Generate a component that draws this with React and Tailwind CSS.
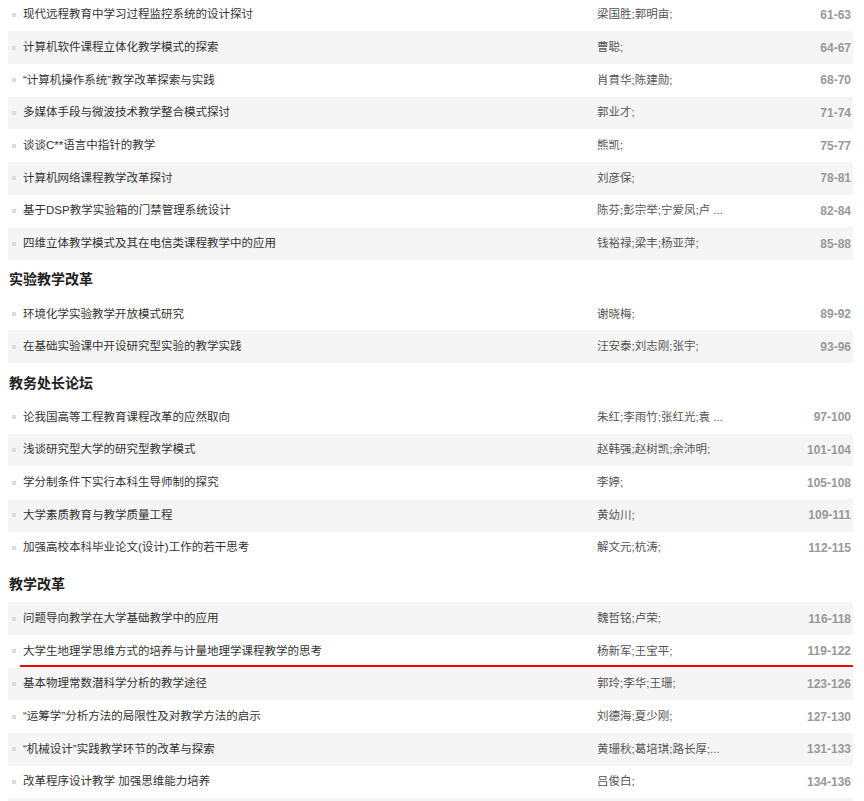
const sections = [
  {
    title: null,
    items: [
      ["现代远程教育中学习过程监控系统的设计探讨", "梁国胜;郭明亩;", "61-63"],
      ["计算机软件课程立体化教学模式的探索", "曹聪;", "64-67"],
      ["“计算机操作系统”教学改革探索与实践", "肖賁华;陈建勋;", "68-70"],
      ["多媒体手段与微波技术教学整合模式探讨", "郭业才;", "71-74"],
      ["谈谈C**语言中指针的教学", "熊凯;", "75-77"],
      ["计算机网络课程教学改革探讨", "刘彦保;", "78-81"],
      ["基于DSP教学实验箱的门禁管理系统设计", "陈芬;彭宗举;宁爱凤;卢 ...", "82-84"],
      ["四维立体教学模式及其在电信类课程教学中的应用", "钱裕禄;梁丰;杨亚萍;", "85-88"],
    ],
  },
  {
    title: "实验教学改革",
    items: [
      ["环境化学实验教学开放模式研究", "谢晓梅;", "89-92"],
      ["在基础实验课中开设研究型实验的教学实践", "汪安泰;刘志刚;张宇;", "93-96"],
    ],
  },
  {
    title: "教务处长论坛",
    items: [
      ["论我国高等工程教育课程改革的应然取向", "朱红;李雨竹;张红光;袁 ...", "97-100"],
      ["浅谈研究型大学的研究型教学模式", "赵韩强;赵树凯;余沛明;", "101-104"],
      ["学分制条件下实行本科生导师制的探究", "李婷;", "105-108"],
      ["大学素质教育与教学质量工程", "黄幼川;", "109-111"],
      ["加强高校本科毕业论文(设计)工作的若干思考", "解文元;杭涛;", "112-115"],
    ],
  },
  {
    title: "教学改革",
    items: [
      ["问题导向教学在大学基础教学中的应用", "魏哲铭;卢荣;", "116-118"],
      ["大学生地理学思维方式的培养与计量地理学课程教学的思考", "杨新军;王宝平;", "119-122", true],
      ["基本物理常数潜科学分析的教学途径", "郭玲;李华;王珊;", "123-126"],
      ["“运筹学”分析方法的局限性及对教学方法的启示", "刘德海;夏少刚;", "127-130"],
      ["“机械设计”实践教学环节的改革与探索", "黄珊秋;葛培琪;路长厚;...", "131-133"],
      ["改革程序设计教学 加强思维能力培养", "吕俊白;", "134-136"],
    ],
  },
];

function Row({ item, gray }) {
  const [title, authors, pages, active] = item;
  return (
    <div className={`relative flex items-center h-[32.65px] ${gray ? "bg-[#f5f5f5]" : "bg-white"}`}>
      <span className="ml-[4px] w-[4px] h-[4px] bg-[#dcdcdc] shrink-0" />
      <span className="ml-[7px] flex-1 whitespace-nowrap text-[11.5px] text-[#333]">{title}</span>
      <span className="w-[134px] whitespace-nowrap text-[11.5px] text-[#555]">{authors}</span>
      <span className="w-[122px] text-right pr-[2px] text-[12px] font-semibold text-[#999]">{pages}</span>
      {active && <span className="absolute left-[12px] right-0 bottom-[1px] h-[2px] bg-[#ff0000]" />}
    </div>
  );
}

export default function App() {
  let idx = 0;
  return (
    <div
      className="bg-white min-h-screen overflow-hidden"
      style={{ fontFamily: '"Liberation Sans", "Noto Sans CJK SC", sans-serif' }}
    >
      <div className="ml-[8px] w-[845px] -mt-[1.3px]">
        {sections.map((sec, si) => (
          <div key={si}>
            {sec.title && (
              <div className="h-[38px] flex items-center pt-[2px] pl-[1px] text-[14px] font-bold text-[#222]">
                {sec.title}
              </div>
            )}
            {sec.items.map((item, i) => {
              const gray = idx % 2 === 1;
              idx++;
              return <Row key={i} item={item} gray={gray} />;
            })}
          </div>
        ))}
        <div className="h-[32.65px] bg-[#f5f5f5]" />
      </div>
    </div>
  );
}
